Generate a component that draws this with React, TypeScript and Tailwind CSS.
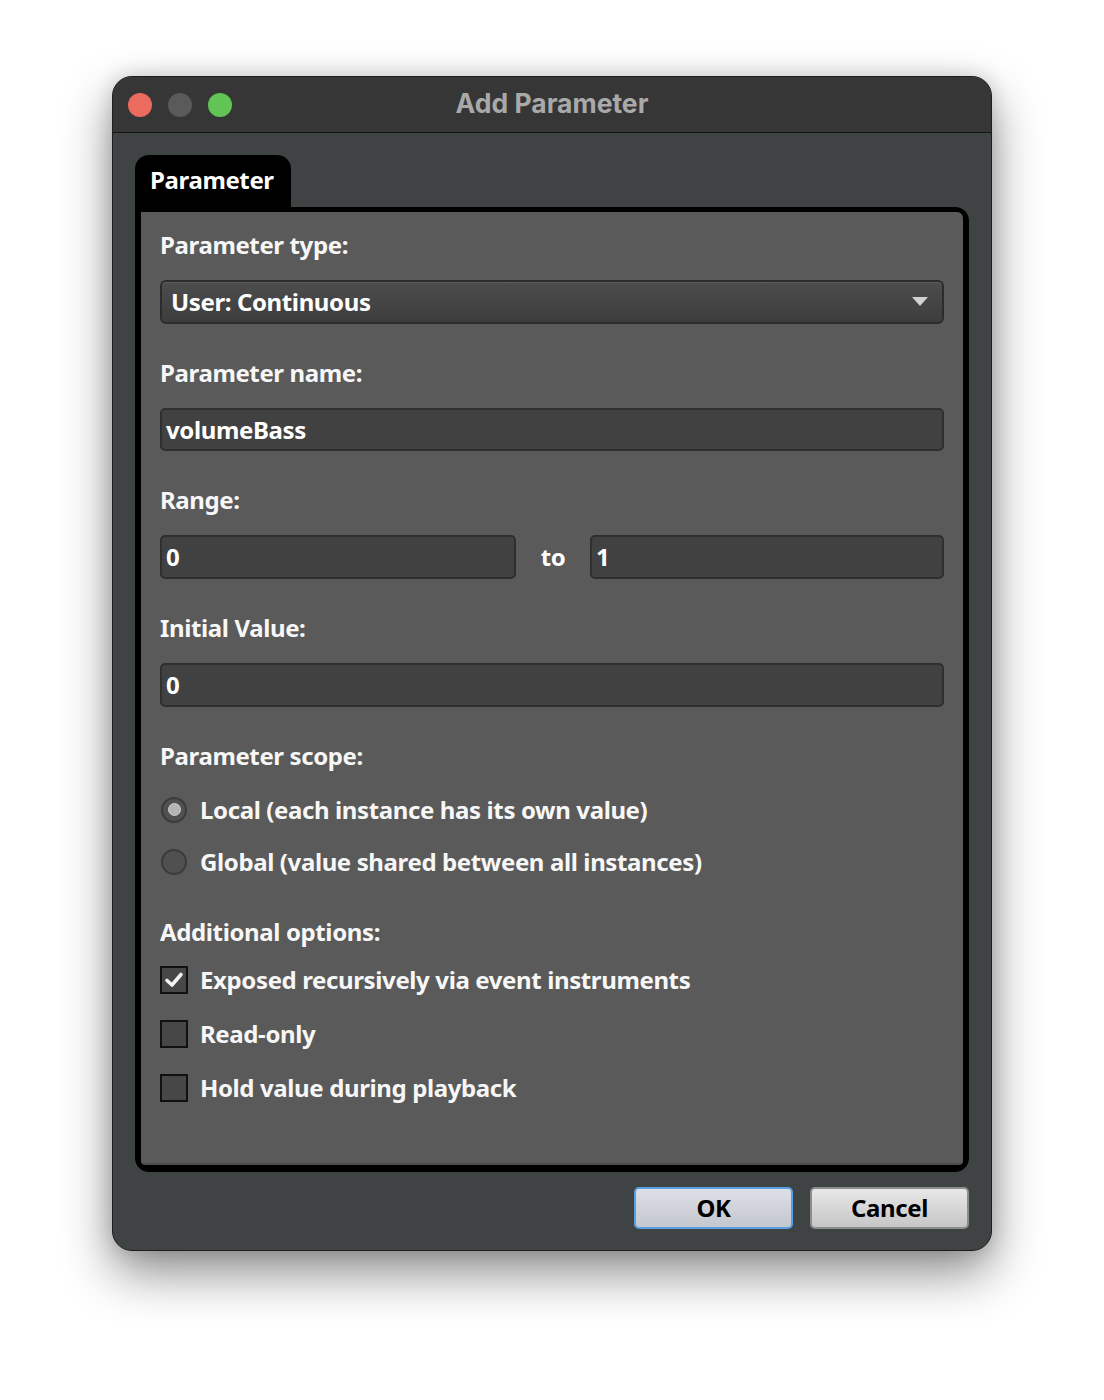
const font = "font-['Noto_Sans','Open_Sans',sans-serif] tracking-[-0.38px]";

const Label = ({ children, className = '' }: { children: React.ReactNode; className?: string }) => (
  <div className={`h-[32px] flex items-center text-[24px] font-bold text-[#f7f7f7] leading-none ${className}`}>
    {children}
  </div>
);

const TextField = ({ value, className = '' }: { value: string; className?: string }) => (
  <div
    className={`h-[44px] flex items-center pl-[4px] rounded-[5px] border-2 border-[#2f2f2f] bg-[#414141] text-[24px] font-bold text-white leading-none ${className}`}
  >
    {value}
  </div>
);

const Radio = ({ checked, label, className = '' }: { checked?: boolean; label: string; className?: string }) => (
  <div className={`h-[40px] flex items-center ${className}`}>
    <div className="ml-[1px] w-[26px] h-[26px] rounded-full border-2 border-[#3b3b3b] bg-[#505050] flex items-center justify-center">
      {checked && <div className="w-[13px] h-[13px] rounded-full bg-[#b4b4b4] border border-[#cfcfcf]" />}
    </div>
    <span className="ml-[13px] text-[24px] font-bold text-[#f7f7f7] leading-none">{label}</span>
  </div>
);

const Checkbox = ({ checked, label, className = '' }: { checked?: boolean; label: string; className?: string }) => (
  <div className={`h-[40px] flex items-center ${className}`}>
    <div className="w-[28px] h-[28px] border-2 border-[#111111] bg-[#474747] flex items-center justify-center">
      {checked && (
        <svg width="20" height="18" viewBox="0 0 20 18">
          <path d="M3 9.5 L8 14 L17 3.5" fill="none" stroke="#f2f2f2" strokeWidth="3.6" strokeLinecap="round" strokeLinejoin="round" />
        </svg>
      )}
    </div>
    <span className="ml-[12px] text-[24px] font-bold text-[#f7f7f7] leading-none">{label}</span>
  </div>
);

export default function App() {
  return (
    <div className={`w-[1104px] h-[1400px] bg-white pt-[76px] ${font}`}>
      <div className="mx-auto w-[880px] h-[1175px] rounded-[20px] border border-[#1d1d1d] bg-[#404344] overflow-hidden shadow-[0_22px_50px_rgba(0,0,0,0.45),0_0_20px_rgba(0,0,0,0.15)] flex flex-col">
        {/* title bar */}
        <div className="relative h-[56px] shrink-0 bg-[#363636] border-b border-[#141414] flex items-center">
          <div className="flex items-center gap-[16px] pl-[15px]">
            <div className="w-[24px] h-[24px] rounded-full bg-[#ec6b5f]" />
            <div className="w-[24px] h-[24px] rounded-full bg-[#5a5a5a]" />
            <div className="w-[24px] h-[24px] rounded-full bg-[#61c454]" />
          </div>
          <div className="absolute inset-0 flex items-center justify-center font-['Inter',sans-serif] font-bold tracking-normal text-[26.5px] text-[#a9a9a9] pb-[1px]">
            Add Parameter
          </div>
        </div>

        {/* body */}
        <div className="flex-1 px-[22px] pt-[22px] pb-[21px] flex flex-col">
          <div className="h-[52px] w-[156px] rounded-t-[14px] bg-black flex items-center pl-[15px] pb-[3px] text-[24px] font-bold text-white leading-none">
            Parameter
          </div>
          <div className="border-black border-x-[6px] border-t-[5px] border-b-[7px] rounded-tr-[14px] rounded-b-[14px] bg-black">
            <div className="bg-[#5a5a5a] border-b-2 border-[#4d4d4d] rounded-tr-[6px] rounded-b-[4px] px-[19px] pt-[17px] pb-[55px] h-[953px] flex flex-col">
              <Label>Parameter type:</Label>
              <div className="mt-[19px] h-[44px] rounded-[6px] border-2 border-[#2c2c2c] bg-gradient-to-b from-[#4d4d4d] to-[#3d3d3d] shadow-[inset_0_1px_0_#5f5f5f] flex items-center justify-between pl-[9px] pr-[14px]">
                <span className="text-[24px] font-bold text-white leading-none">User: Continuous</span>
                <svg width="16" height="9" viewBox="0 0 16 9">
                  <path d="M0 0 H16 L8 9 Z" fill="#d2d2d2" />
                </svg>
              </div>

              <Label className="mt-[33px]">Parameter name:</Label>
              <TextField value="volumeBass" className="mt-[19px]" />

              <Label className="mt-[33px]">Range:</Label>
              <div className="mt-[19px] flex items-center">
                <TextField value="0" className="w-[356px]" />
                <div className="w-[74px] text-center text-[24px] font-bold text-white leading-none">to</div>
                <TextField value="1" className="flex-1" />
              </div>

              <Label className="mt-[33px]">Initial Value:</Label>
              <TextField value="0" className="mt-[19px]" />

              <Label className="mt-[33px]">Parameter scope:</Label>
              <Radio checked label="Local (each instance has its own value)" className="mt-[18px]" />
              <Radio label="Global (value shared between all instances)" className="mt-[12px]" />

              <Label className="mt-[34px]">Additional options:</Label>
              <Checkbox checked label="Exposed recursively via event instruments" className="mt-[13px]" />
              <Checkbox label="Read-only" className="mt-[14px]" />
              <Checkbox label="Hold value during playback" className="mt-[14px]" />
            </div>
          </div>

          <div className="mt-[15px] flex justify-end gap-[17px]">
            <button className="w-[159px] h-[42px] rounded-[5px] border-2 border-[#5a9ee6] bg-gradient-to-b from-[#dde0e6] to-[#c3c7ce] text-[24px] font-bold text-black leading-none">
              OK
            </button>
            <button className="w-[159px] h-[42px] rounded-[5px] border-2 border-[#8c8c8c] bg-gradient-to-b from-[#e8e8e8] to-[#c6c6c6] text-[24px] font-bold text-black leading-none">
              Cancel
            </button>
          </div>
        </div>
      </div>
    </div>
  );
}
